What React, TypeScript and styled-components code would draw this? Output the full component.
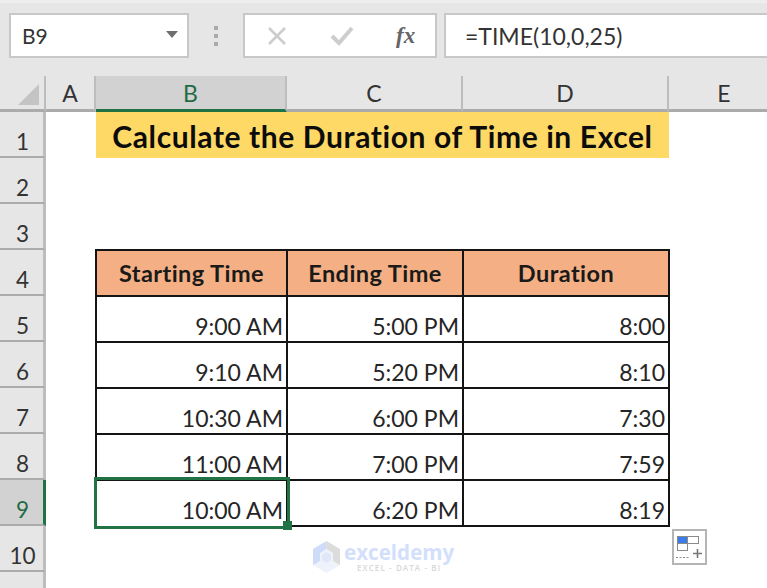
import React from "react";
import styled, { createGlobalStyle } from "styled-components";

const Global = createGlobalStyle`
  html, body { margin: 0; padding: 0; background: #fff; }
  body { font-family: Lato, "Liberation Sans", sans-serif; }
`;

const Page = styled.div`
  position: relative;
  width: 767px;
  height: 588px;
  overflow: hidden;
  background: #fff;
`;

const FormulaBar = styled.div`
  display: flex;
  align-items: center;
  height: 76px;
  box-sizing: border-box;
  padding: 13px 0 18px 9px;
  background: #e6e6e6;
  border-top: 3px solid #ededed;
`;

const Box = styled.div<{ $w?: number }>`
  display: flex;
  align-items: center;
  box-sizing: border-box;
  height: 45px;
  margin-top: -3px;
  background: #fff;
  border: 2px solid #c8c8c8;
  ${(p) => (p.$w ? `width: ${p.$w}px; flex: none;` : "flex: 1; border-right: none;")}
`;

const NameText = styled.span`
  flex: 1;
  padding-left: 11px;
  font-size: 21px;
  color: #333;
`;

const Caret = styled.span`
  width: 0;
  height: 0;
  margin-right: 9px;
  margin-top: -3px;
  border-left: 6px solid transparent;
  border-right: 6px solid transparent;
  border-top: 7px solid #6e6e6e;
`;

const Grip = styled.div`
  flex: none;
  width: 54px;
  display: flex;
  flex-direction: column;
  align-items: center;
  gap: 4px;
  margin-top: -3px;
`;

const GripDot = styled.span`
  width: 4px;
  height: 4px;
  background: #a9a9a9;
`;

const FnButtons = styled.div`
  display: flex;
  align-items: center;
  padding-left: 22px;
`;

const CheckSlot = styled.span`
  display: flex;
  margin: 0 42px 0 43px;
`;

const Fx = styled.span`
  font-family: "Liberation Serif", serif;
  font-style: italic;
  font-weight: 700;
  font-size: 23px;
  line-height: 24px;
  color: #666;
`;

const Gap = styled.div`
  flex: none;
  width: 7px;
`;

const FormulaText = styled.span`
  padding-left: 19px;
  font-size: 23px;
  color: #333;
`;

const Sheet = styled.div`
  display: grid;
  grid-template-columns: 46px 50px 191px 176px 206px 112px;
  grid-template-rows: 36px repeat(10, 46px) 16px;
`;

const Corner = styled.div`
  background: #e6e6e6;
  border-right: 2px solid #bdbdbd;
  border-bottom: 3px solid #ababab;
  box-sizing: border-box;
  display: flex;
  align-items: flex-end;
  padding: 0 0 4px 18px;
`;

const ColHead = styled.div<{ $sel?: boolean }>`
  display: flex;
  align-items: center;
  justify-content: center;
  box-sizing: border-box;
  padding-top: 1px;
  font-size: 23px;
  color: ${(p) => (p.$sel ? "#1f6b45" : "#333")};
  background: ${(p) => (p.$sel ? "#d2d2d2" : "#e6e6e6")};
  border-right: 2px solid #bdbdbd;
  border-bottom: 3px solid ${(p) => (p.$sel ? "#217346" : "#ababab")};
`;

const RowHead = styled.div<{ $sel?: boolean; $open?: boolean }>`
  display: flex;
  align-items: center;
  justify-content: center;
  box-sizing: border-box;
  padding: 15px 0 0 2px;
  font-size: 22.5px;
  color: ${(p) => (p.$sel ? "#1f6b45" : "#333")};
  background: ${(p) => (p.$sel ? "#d2d2d2" : "#e6e6e6")};
  border-right: 3px solid ${(p) => (p.$sel ? "#217346" : "#bdbdbd")};
  border-bottom: ${(p) => (p.$open ? "none" : "2px solid #ababab")};
`;

const Blank = styled.div<{ $span?: number }>`
  ${(p) => p.$span && `grid-column: span ${p.$span};`}
`;

const Title = styled.div`
  grid-column: span 3;
  display: flex;
  align-items: center;
  justify-content: center;
  padding-top: 2px;
  background: #ffd966;
  font-weight: 700;
  font-size: 30px;
  letter-spacing: 0.6px;
  color: #0c0c0c;
`;

const HeadCell = styled.div`
  display: flex;
  align-items: center;
  justify-content: center;
  margin: -1px;
  border: 2px solid #141414;
  background: #f4b084;
  font-weight: 700;
  font-size: 23.5px;
  letter-spacing: 0.45px;
  color: #1a1a1a;
`;

const DataCell = styled.div<{ $selected?: boolean }>`
  position: relative;
  display: flex;
  align-items: flex-end;
  justify-content: flex-end;
  margin: -1px;
  padding: 0 3px 0 0;
  border: 2px solid #141414;
  background: #fff;
  font-size: 23px;
  line-height: 30px;
  color: #252525;
  ${(p) =>
    p.$selected &&
    `
    z-index: 2;
    border: 3px solid #217346;
    margin: -3px -3px -3px -2px;
    padding: 0 4px 1px 0;
    background: transparent;
  `}
`;

const FillHandle = styled.span`
  position: absolute;
  right: -5px;
  bottom: -4px;
  width: 9px;
  height: 9px;
  background: #217346;
`;

const PasteOptions = styled.div`
  position: absolute;
  left: 672px;
  top: 529px;
  width: 35px;
  height: 36px;
  box-sizing: border-box;
  border: 2px solid #b5b5b5;
  background: #fff;
`;

const Watermark = styled.div`
  position: absolute;
  left: 312px;
  top: 541px;
  display: flex;
  gap: 3px;
`;

const WmText = styled.div`
  display: flex;
  flex-direction: column;
  align-items: center;
`;

const WmName = styled.span`
  font-family: "Open Sans", sans-serif;
  font-weight: 700;
  font-size: 20.6px;
  line-height: 22px;
  color: #d3dffb;
`;

const WmSub = styled.span`
  font-family: "Open Sans", sans-serif;
  font-weight: 600;
  font-size: 8px;
  line-height: 9px;
  letter-spacing: 1.1px;
  color: #d8d8d8;
`;

const rows = [
  ["9:00 AM", "5:00 PM", "8:00"],
  ["9:10 AM", "5:20 PM", "8:10"],
  ["10:30 AM", "6:00 PM", "7:30"],
  ["11:00 AM", "7:00 PM", "7:59"],
  ["10:00 AM", "6:20 PM", "8:19"],
];

const SelectAll = () => (
  <svg width="21" height="21" viewBox="0 0 21 21">
    <path d="M0 21 L21 0 V21 Z" fill="#c4c4c4" />
  </svg>
);

const CrossIcon = () => (
  <svg width="20" height="20" viewBox="0 0 20 20">
    <path d="M2 2 L18 18 M18 2 L2 18" stroke="#cdcdcd" strokeWidth="2.6" fill="none" />
  </svg>
);

const CheckIcon = () => (
  <svg width="24" height="20" viewBox="0 0 24 20">
    <path d="M2 10 L9 17 L22 2" stroke="#cdcdcd" strokeWidth="4" fill="none" />
  </svg>
);

const PasteIcon = () => (
  <svg width="31" height="32" viewBox="0 0 31 32">
    <rect x="3.5" y="5.5" width="10" height="7" fill="#3b7de8" stroke="#8a8a8a" />
    <rect x="13.5" y="5.5" width="11" height="7" fill="#fff" stroke="#8a8a8a" />
    <rect x="3.5" y="12.5" width="10" height="7" fill="#fff" stroke="#8a8a8a" />
    <path d="M2 26.5 H15" stroke="#8a8a8a" strokeDasharray="2 1.5" fill="none" />
    <path d="M19 22.5 H28 M23.5 18 V27" stroke="#777" strokeWidth="1.6" fill="none" />
  </svg>
);

const WmLogo = () => (
  <svg width="29" height="32" viewBox="0 0 29 32">
    <path d="M14.5 0 L28 8 V24 L14.5 32 L1 24 V8 Z" fill="#eef2fb" />
    <path d="M14.5 0 L1 8 V24 L8 20 V12 L14.5 8 Z" fill="#cfdcf9" />
    <path d="M14.5 0 L28 8 V24 L21 20 V12 L14.5 8 Z" fill="#dcdcdc" />
    <path d="M14.5 11 L19 14 V19 L14.5 22 L10 19 V14 Z" fill="#dfe7f8" />
  </svg>
);

export default function App() {
  return (
    <Page>
      <Global />
      <FormulaBar>
        <Box $w={180}>
          <NameText>B9</NameText>
          <Caret />
        </Box>
        <Grip>
          <GripDot />
          <GripDot />
          <GripDot />
        </Grip>
        <Box $w={194}>
          <FnButtons>
            <CrossIcon />
            <CheckSlot>
              <CheckIcon />
            </CheckSlot>
            <Fx>fx</Fx>
          </FnButtons>
        </Box>
        <Gap />
        <Box>
          <FormulaText>=TIME(10,0,25)</FormulaText>
        </Box>
      </FormulaBar>
      <Sheet>
        <Corner>
          <SelectAll />
        </Corner>
        <ColHead>A</ColHead>
        <ColHead $sel>B</ColHead>
        <ColHead>C</ColHead>
        <ColHead>D</ColHead>
        <ColHead>E</ColHead>

        <RowHead>1</RowHead>
        <Blank />
        <Title>Calculate the Duration of Time in Excel</Title>
        <Blank />

        <RowHead>2</RowHead>
        <Blank $span={5} />
        <RowHead>3</RowHead>
        <Blank $span={5} />

        <RowHead>4</RowHead>
        <Blank />
        <HeadCell>Starting Time</HeadCell>
        <HeadCell>Ending Time</HeadCell>
        <HeadCell>Duration</HeadCell>
        <Blank />

        {rows.map((r, i) => (
          <React.Fragment key={i}>
            <RowHead $sel={i === 4}>{i + 5}</RowHead>
            <Blank />
            <DataCell $selected={i === 4}>
              {r[0]}
              {i === 4 && <FillHandle />}
            </DataCell>
            <DataCell>{r[1]}</DataCell>
            <DataCell>{r[2]}</DataCell>
            <Blank />
          </React.Fragment>
        ))}

        <RowHead>10</RowHead>
        <Blank $span={5} />
        <RowHead $open />
      </Sheet>
      <Watermark>
        <WmLogo />
        <WmText>
          <WmName>exceldemy</WmName>
          <WmSub>EXCEL - DATA - BI</WmSub>
        </WmText>
      </Watermark>
      <PasteOptions>
        <PasteIcon />
      </PasteOptions>
    </Page>
  );
}
